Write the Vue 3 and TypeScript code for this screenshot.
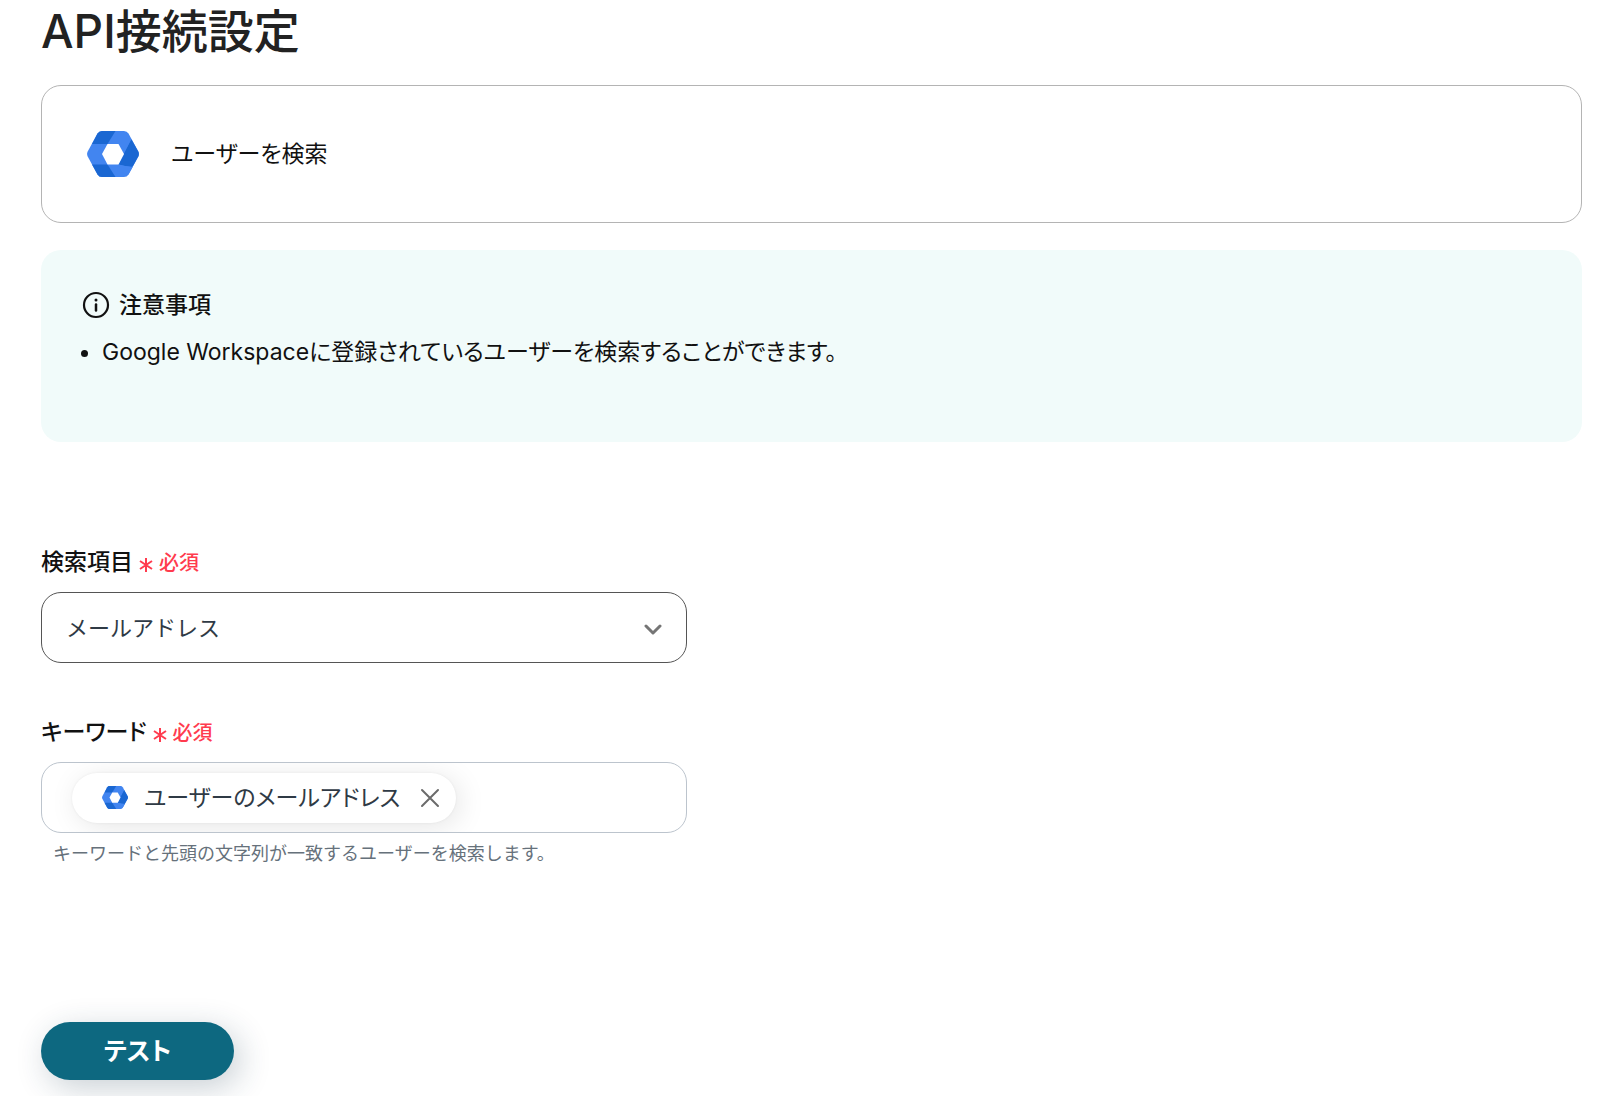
<script setup lang="ts">
import { ref } from 'vue'
import type { FunctionalComponent } from 'vue'
import { h } from 'vue'

const HexLogo: FunctionalComponent = () =>
  h('svg', { viewBox: '0 0 52 46', 'aria-hidden': 'true' }, [
    h('path', {
      fill: '#4285f0',
      d: 'M15 0H37Q40 0 41.500 2.500L51.300 20.500Q52.500 23 51.300 25.500L41.500 43.500Q40 46 37 46H15Q12 46 10.500 43.500L0.700 25.500Q-0.500 23 0.700 20.500L10.500 2.500Q12 0 15 0Z',
    }),
    h('path', { fill: '#1a67d2', d: 'M15 0H28.500L20.500 13H5L10.500 2.500Q12 0 15 0Z' }),
    h('path', { fill: '#1a67d2', d: 'M5 33.500H20.500L28.500 46H15Q12 46 10.500 43.500Z' }),
    h('path', { fill: '#1a67d2', d: 'M44.500 8.500L51.300 20.500Q52.500 23 51.300 25.500L46 35L38 34.800L37 23Z' }),
    h('path', { fill: '#1a67d2', d: 'M44.500 8.500L31.500 33.500L38 35L45.500 36Z' }),
    h('path', { fill: '#4285f0', d: 'M31.500 33.500L38 35L45.700 36L41.500 43.500L30 40Z' }),
    h('path', { fill: '#fff', d: 'M20.500 13H31.500L37 23L31.500 33.500H20.500L15 23Z' }),
  ])

const fieldOptions = ['メールアドレス', '名前']
const searchField = ref(fieldOptions[0])
const keyword = ref('')
const tokens = ref(['ユーザーのメールアドレス'])

function removeToken(index: number) {
  tokens.value.splice(index, 1)
}
</script>

<template>
  <main class="page">
    <h1 class="title">API接続設定</h1>

    <section class="action">
      <HexLogo class="action-logo" />
      <span>ユーザーを検索</span>
    </section>

    <section class="notice">
      <h2 class="notice-title">
        <svg class="notice-icon" viewBox="0 0 28 28" aria-hidden="true">
          <circle cx="14" cy="14" r="12" fill="none" stroke="#111" stroke-width="2.200" />
          <circle cx="14" cy="9" r="1.500" fill="#111" />
          <path d="M14 13.500V19.500" stroke="#111" stroke-width="2.500" stroke-linecap="round" />
        </svg>
        注意事項
      </h2>
      <ul class="notice-list">
        <li>Google Workspaceに登録されているユーザーを検索することができます。</li>
      </ul>
    </section>

    <form class="form" @submit.prevent>
      <div class="field">
        <label class="label" for="search-field">
          検索項目
          <span class="required">
            <svg viewBox="0 0 14 16" aria-hidden="true"><path d="M7 1V15M1 4L13 12M13 4L1 12" /></svg>必須
          </span>
        </label>
        <div class="select-wrap">
          <select id="search-field" v-model="searchField" class="box select">
            <option v-for="option in fieldOptions" :key="option">{{ option }}</option>
          </select>
          <svg class="chevron" viewBox="0 0 18 12" aria-hidden="true"><path d="M2 2L9 9L16 2" /></svg>
        </div>
      </div>

      <div class="field">
        <label class="label" for="keyword">
          キーワード
          <span class="required">
            <svg viewBox="0 0 14 16" aria-hidden="true"><path d="M7 1V15M1 4L13 12M13 4L1 12" /></svg>必須
          </span>
        </label>
        <div class="box keyword">
          <span v-for="(token, index) in tokens" :key="token" class="chip">
            <HexLogo class="chip-logo" />
            <span>{{ token }}</span>
            <button type="button" class="chip-remove" aria-label="削除" @click="removeToken(index)">
              <svg viewBox="0 0 20 20" aria-hidden="true"><path d="M2 2L18 18M18 2L2 18" /></svg>
            </button>
          </span>
          <input id="keyword" v-model="keyword" class="keyword-input" type="text" />
        </div>
        <p class="help">キーワードと先頭の文字列が一致するユーザーを検索します。</p>
      </div>

      <button type="submit" class="submit">テスト</button>
    </form>
  </main>
</template>

<style>
body {
  margin: 0;
  background: #fff;
}
</style>

<style scoped>
.page {
  box-sizing: border-box;
  padding: 0 18px 16px 41px;
  font-family: Inter, "Noto Sans CJK JP", sans-serif;
  font-size: 23px;
  font-weight: 390;
  font-feature-settings: "palt";
  font-optical-sizing: none;
  line-height: 32px;
  color: #111;
}

.title {
  margin: 0;
  padding-bottom: 23px;
  font-size: 46px;
  font-weight: 500;
  line-height: 62px;
  color: #222;
}

.action {
  display: flex;
  align-items: center;
  gap: 32px;
  box-sizing: border-box;
  min-height: 138px;
  padding: 0 45px;
  border: 1px solid #b4b4b4;
  border-radius: 20px;
}

.action-logo {
  width: 52px;
  height: 46px;
}

.notice {
  margin-top: 27px;
  padding: 39px 41px 74px;
  border-radius: 20px;
  background: #f1fbfa;
}

.notice-title {
  display: flex;
  align-items: center;
  gap: 9px;
  margin: 0;
  font-size: 23px;
  font-weight: 500;
  line-height: 32px;
}

.notice-icon {
  width: 28px;
  height: 28px;
}

.notice-list {
  margin: 15px 0 0;
  padding-left: 20px;
}

.form {
  display: flex;
  flex-direction: column;
  align-items: flex-start;
  padding-top: 104px;
}

.field {
  width: 100%;
  max-width: 646px;
}

.field + .field {
  margin-top: 53px;
}

.label {
  display: flex;
  align-items: center;
  gap: 6px;
  margin-bottom: 14px;
  font-size: 23px;
  font-weight: 500;
  line-height: 32px;
}

.required {
  display: inline-flex;
  align-items: center;
  gap: 6px;
  padding-top: 2px;
  font-size: 20px;
  line-height: 30px;
  color: #ff3b4e;
}

.required svg {
  width: 14px;
  height: 16px;
  margin-top: 4px;
  fill: none;
  stroke: currentColor;
  stroke-width: 2;
}

.box {
  box-sizing: border-box;
  width: 100%;
  height: 71px;
  border: 1px solid #bcc4cd;
  border-radius: 20px;
  background: #fff;
  color: #2f3a45;
  font: inherit;
  font-feature-settings: inherit;
}

.select-wrap {
  position: relative;
}

.select {
  display: block;
  padding: 0 64px 0 24px;
  border-color: #555;
  font-size: 22px;
  font-feature-settings: normal;
  appearance: none;
}

.chevron {
  position: absolute;
  top: 32px;
  right: 25px;
  width: 18px;
  height: 12px;
  fill: none;
  stroke: #757575;
  stroke-width: 3;
  stroke-linecap: round;
  stroke-linejoin: round;
  pointer-events: none;
}

.keyword {
  display: flex;
  align-items: center;
  gap: 12px;
  padding: 0 20px 0 30px;
  overflow: hidden;
}

.chip {
  display: inline-flex;
  align-items: center;
  flex: none;
  box-sizing: border-box;
  height: 50px;
  padding: 0 16px 0 30px;
  border-radius: 25px;
  background: #fff;
  box-shadow: 0 0 3px rgba(0, 0, 0, 0.06), 4px 4px 28px rgba(0, 0, 0, 0.1);
}

.chip-logo {
  width: 26px;
  height: 23px;
  margin-right: 16px;
}

.chip-remove {
  display: flex;
  margin: 0 0 0 20px;
  padding: 0;
  border: 0;
  background: none;
  cursor: pointer;
}

.chip-remove svg {
  width: 20px;
  height: 20px;
  fill: none;
  stroke: #6b6b6b;
  stroke-width: 2;
  stroke-linecap: round;
}

.keyword-input {
  flex: 1;
  min-width: 0;
  border: 0;
  outline: 0;
  background: none;
  color: inherit;
  font: inherit;
}

.help {
  margin: 7px 0 0;
  padding-left: 12px;
  font-size: 18px;
  font-feature-settings: normal;
  line-height: 28px;
  color: #66717b;
}

.submit {
  height: 58px;
  min-width: 193px;
  margin-top: 154px;
  padding: 0 60px;
  border: 0;
  border-radius: 29px;
  background: #0d6880;
  color: #fff;
  font: inherit;
  font-feature-settings: inherit;
  font-size: 25px;
  font-weight: 600;
  box-shadow: 6px 8px 32px rgba(30, 60, 80, 0.24);
  cursor: pointer;
}
</style>
